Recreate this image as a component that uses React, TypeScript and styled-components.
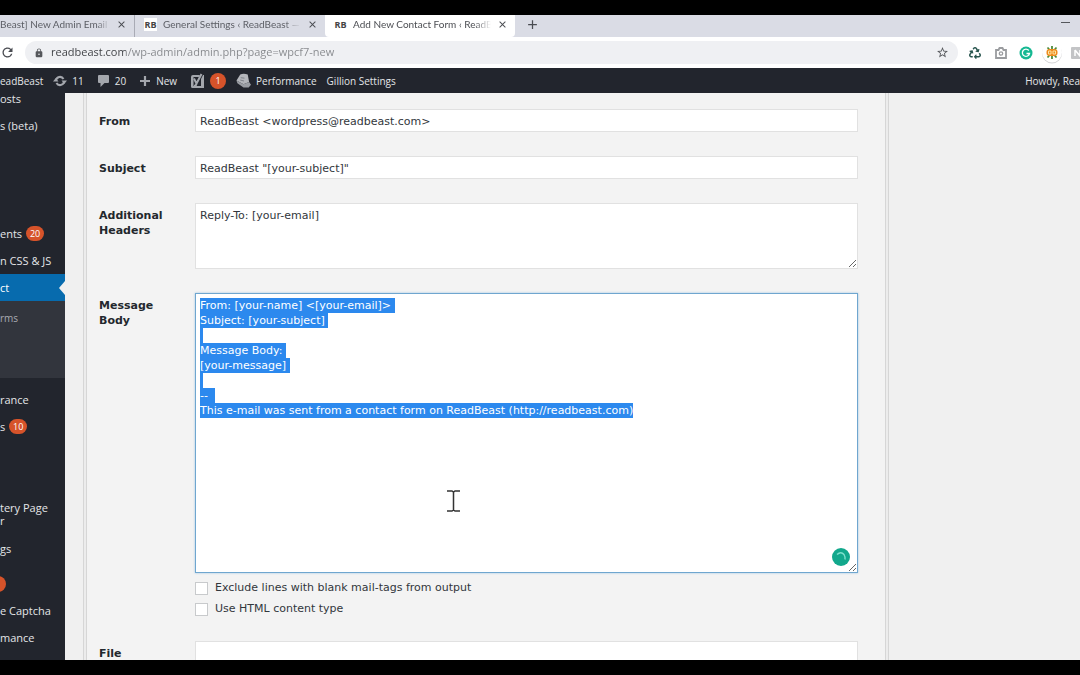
import React, { useEffect, useRef } from "react";
import styled, { createGlobalStyle, css } from "styled-components";
import { FaRecycle } from "react-icons/fa";
import { MdOutlineStarBorder, MdLock, MdRefresh, MdClose, MdAdd } from "react-icons/md";

const uiFont = `"Open Sans", "Noto Sans", sans-serif`;
const tabFont = `Lato, "Open Sans", sans-serif`;
const formFont = `"DejaVu Sans", sans-serif`;

const GlobalStyle = createGlobalStyle`
  *, *::before, *::after { box-sizing: border-box; }
  body { margin: 0; background: #000; overflow: hidden; }
  button { font: inherit; color: inherit; background: none; border: 0; padding: 0; }
  a { color: inherit; text-decoration: none; }
`;

const Frame = styled.div`
  height: 100vh;
  padding: 15px 0;
  background: #000;
  display: flex;
  flex-direction: column;
  font-family: ${uiFont};
  font-size: 10px;
`;

/* Browser chrome */

const TabStrip = styled.div`
  flex: none;
  height: 22px;
  display: flex;
  background: #dadce5;
  color: #5c5e65;
  font-family: ${tabFont};
`;

const Tab = styled.div<{ $active?: boolean; $cut?: boolean }>`
  flex: 0 1 auto;
  width: ${(p) => (p.$cut ? 135 : 190)}px;
  height: 22px;
  padding: 0 7px 4px ${(p) => (p.$cut ? 0 : 9)}px;
  display: flex;
  align-items: center;
  gap: 6px;
  ${(p) => p.$active && css`background: #fff; border-radius: 0 0 4px 4px; color: #4c4e53;`}
  ${(p) => p.$cut && css`border-right: 1px solid #a9abb5;`}
`;

const Favicon = styled.span`
  flex: none;
  width: 13px;
  height: 13px;
  background: #fff;
  color: #444;
  font-family: ${uiFont};
  font-size: 9px;
  line-height: 13px;
  font-weight: 700;
  text-align: center;
`;

const TabTitle = styled.span`
  flex: 1;
  overflow: hidden;
  white-space: nowrap;
  mask-image: linear-gradient(to right, #000 88%, transparent);
`;

const IconButton = styled.button`
  flex: none;
  display: grid;
  place-items: center;
  color: #4a4c52;
`;

const NewTab = styled(IconButton)`
  width: 34px;
  padding-bottom: 4px;
`;

const Minimize = styled(IconButton)`
  margin-left: auto;
  width: 30px;
  padding-bottom: 7px;
`;

const Toolbar = styled.div`
  flex: none;
  height: 31px;
  display: flex;
  align-items: center;
  background: #fff;
  overflow: hidden;
`;

const Omnibox = styled.label`
  flex: 1;
  height: 23px;
  margin-left: 10px;
  padding: 0 9px;
  display: flex;
  align-items: center;
  gap: 7px;
  border-radius: 12px;
  background: #eff0f3;
  color: #55575b;
`;

const Address = styled.input`
  flex: 1;
  min-width: 0;
  height: 20px;
  border: 0;
  padding: 0 0 2px;
  outline: 0;
  font-family: ${uiFont};
  font-size: 11px;
  line-height: 18px;
  color: #77797e;
  background: linear-gradient(to right, #3c3e42 75px, #85878b 75px);
  background-clip: text;
  -webkit-text-fill-color: transparent;
`;

const Extensions = styled.div`
  flex: none;
  width: 131px;
  margin-right: -9px;
  padding-left: 5px;
  display: flex;
  justify-content: space-between;
`;

const Extension = styled(IconButton)`
  width: 24px;
  height: 24px;
`;

/* WordPress admin */

const AdminBar = styled.nav`
  position: relative;
  z-index: 1;
  flex: none;
  height: 25px;
  display: flex;
  align-items: center;
  background: #22252d;
  color: #e4e5e8;
  overflow: hidden;
  white-space: nowrap;
`;

const BarLink = styled.a<{ $tight?: boolean }>`
  flex: none;
  margin-right: ${(p) => (p.$tight ? 10 : 13)}px;
  display: flex;
  align-items: center;
  gap: 5px;
`;

const Howdy = styled.a`
  margin-left: auto;
`;

const Badge = styled.span<{ $wide?: boolean }>`
  flex: none;
  width: ${(p) => (p.$wide ? 18 : 16)}px;
  height: ${(p) => (p.$wide ? 15 : 16)}px;
  border-radius: 8px;
  background: #d6532a;
  color: #fff;
  font-size: 9px;
  line-height: 15px;
  text-align: center;
`;

const Screen = styled.div`
  flex: 1;
  min-height: 0;
  display: flex;
  overflow: hidden;
  background: #f0f0f0;
`;

const Sidebar = styled.nav`
  flex: none;
  width: 65px;
  margin-top: -8px;
  background: #22252d;
  color: #e4e5e8;
  font-size: 11px;
  white-space: nowrap;
`;

const MenuItem = styled.a<{ $current?: boolean; $two?: boolean }>`
  position: relative;
  height: ${(p) => (p.$two ? 41 : 27)}px;
  display: flex;
  align-items: ${(p) => (p.$two ? "flex-start" : "center")};
  gap: 4px;
  ${(p) => p.$two && css`padding-top: 7px; line-height: 13px;`}
  ${(p) => p.$current && css`
    background: #076bae;
    color: #fff;
    &::after {
      content: "";
      position: absolute;
      right: 0;
      top: 7px;
      border: 7px solid transparent;
      border-left-width: 0;
      border-right: 6px solid #f0f0f0;
    }
  `}
`;

const Submenu = styled.div`
  height: 77px;
  padding-top: 10px;
  background: #32353d;
  color: #a9abb2;
  font-size: 10px;
  line-height: 15px;
`;

const MenuGap = styled.div<{ $size: number }>`
  height: ${(p) => p.$size}px;
`;

const ClippedBadge = styled(Badge)`
  margin-left: -10px;
`;

const Postbox = styled.main`
  flex: 1;
  min-width: 0;
  margin: 0 191px 0 18px;
  border: solid #d6d6d6;
  border-width: 0 1px;
  padding: 0 2px;
  height: max-content;
  background: #ececec;
`;

const Panel = styled.form`
  padding: 16px 27px 24px 12px;
  border: solid #d6d6d6;
  border-width: 0 1px;
  background: #f3f3f3;
  display: grid;
  grid-template-columns: 96px 1fr;
  row-gap: 24px;
  font-family: ${formFont};
  font-size: 11px;
  line-height: 15px;
  color: #32373c;
`;

const FieldLabel = styled.label`
  padding: 5px 20px 0 0;
  font-weight: 700;
  color: #23282d;
`;

const control = css`
  display: block;
  width: 100%;
  margin: 0;
  border: 1px solid #e1e1e1;
  border-radius: 0;
  outline: 0;
  background: #fff;
  color: #32373c;
  font-family: ${formFont};
  font-size: 11px;
  line-height: 15px;
`;

const TextInput = styled.input`
  ${control}
  height: 23px;
  padding: 3px 4px 2px;
`;

const TextBox = styled.textarea<{ $tall?: boolean }>`
  ${control}
  height: ${(p) => (p.$tall ? 280 : 66)}px;
  padding: 4px;
  resize: vertical;
  &:focus { border-color: #6fa6cf; box-shadow: 0 0 2px #9cc4e2; }
  &::selection { background: #2c89ee; color: #fff; }
`;

const BodyField = styled.div`
  position: relative;
`;

const Grammar = styled.svg`
  position: absolute;
  top: 255px;
  right: 8px;
`;

const TextCursor = styled.svg`
  position: absolute;
  top: 197px;
  left: 252px;
`;

const Checks = styled.div`
  margin-top: 7px;
  display: grid;
  row-gap: 5px;
`;

const CheckLabel = styled.label`
  display: flex;
  align-items: center;
  gap: 7px;
  line-height: 16px;
`;

const Checkbox = styled.input`
  appearance: none;
  width: 13px;
  height: 13px;
  margin: 0;
  border: 1px solid #c8cacc;
  background: #fff;
`;

const message = [
  "From: [your-name] <[your-email]>",
  "Subject: [your-subject]",
  "",
  "Message Body:",
  "[your-message]",
  "",
  "-- ",
  "This e-mail was sent from a contact form on ReadBeast (http://readbeast.com)",
].join("\n");

function CloseTab() {
  return (
    <IconButton aria-label="Close tab">
      <MdClose size={11} />
    </IconButton>
  );
}

function UpdateIcon() {
  return (
    <svg width="14" height="12" viewBox="0 0 14 12">
      <path d="M3 5.500a4 4 0 0 1 7.500-1.500M11 6.500a4 4 0 0 1-7.500 1.500" fill="none" stroke="#a4a7ad" strokeWidth="2" />
      <path d="M8.500 5.500H14l-2.700 3.500zM0 6.500h5.500L2.800 3z" fill="#a4a7ad" />
    </svg>
  );
}

function CommentIcon() {
  return (
    <svg width="13" height="13" viewBox="0 0 13 13">
      <path d="M2 1h9q1 0 1 1v6q0 1-1 1H7.500l-4 4V9H2Q1 9 1 8V2q0-1 1-1z" fill="#a4a7ad" />
    </svg>
  );
}

function PlusIcon() {
  return (
    <svg width="12" height="12" viewBox="0 0 12 12">
      <path d="M6 1v10M1 6h10" stroke="#a4a7ad" strokeWidth="2.200" />
    </svg>
  );
}

function YoastIcon() {
  return (
    <svg width="15" height="16" viewBox="0 0 15 16">
      <path d="M3 2h7l-1 2H3.500v9H11V6l2-4h1v13H2.500Q1 15 1 13.500V4Q1 2 3 2z" fill="#a4a7ad" />
      <path d="M4 5.500l2.500 5L11.500 1M6.500 10.500Q6 13 4 13" fill="none" stroke="#a4a7ad" strokeWidth="2" />
    </svg>
  );
}

function CubeIcon() {
  return (
    <svg width="15" height="15" viewBox="0 0 16 16">
      <path d="M4.500 1.500Q8 0 12.500 1.500L14 9.500 8 12 .5 8z" fill="#b4b6bb" />
      <path d="M.5 8L8 12l6-2.500 2 3-2.500 3H8L1.500 11z" fill="#9a9da3" />
      <path d="M5 5l4 .5M4.500 7.500l4 1" stroke="#7b7e85" />
    </svg>
  );
}

function CameraIcon() {
  return (
    <svg width="12" height="12" viewBox="0 0 12 12">
      <path d="M1 3h2.500l1-2h3l1 2H11v8H1z" fill="none" stroke="#9a9c9f" strokeWidth="1.800" />
      <circle cx="6" cy="6.500" r="1.700" fill="none" stroke="#9a9c9f" strokeWidth="1.300" />
    </svg>
  );
}

function GrammarlyIcon() {
  return (
    <svg width="14" height="14" viewBox="0 0 14 14">
      <circle cx="7" cy="7" r="6.500" fill="#15b892" />
      <path d="M9.800 4.500A3.600 3.600 0 1 0 10.500 7.500H7.500" fill="none" stroke="#fff" strokeWidth="1.300" />
    </svg>
  );
}

function FruitIcon() {
  return (
    <svg width="22" height="22" viewBox="0 0 22 22">
      <circle cx="11" cy="11.500" r="10" fill="#d4d4d6" />
      <circle cx="11" cy="10.500" r="10" fill="#fff" />
      <path d="M11 4v13M6.500 5.500l9 10M15.500 5.500l-9 10" stroke="#4d8b3b" strokeWidth="1.800" />
      <rect x="5.500" y="7" width="11" height="7" rx="3" fill="#ef8a1d" />
      <path d="M7.500 9h2.500v3H7.500zM12 9h2.500v3H12z" fill="none" stroke="#fbe3a0" />
    </svg>
  );
}

function GreyTile() {
  return (
    <svg width="14" height="14" viewBox="0 0 14 14">
      <rect x="1" y="1" width="13" height="12" rx="1" fill="#c3c4c6" />
      <path d="M5 4v6M5 4l5 6V4" fill="none" stroke="#fff" strokeWidth="1.500" />
    </svg>
  );
}

export default function App() {
  const body = useRef<HTMLTextAreaElement>(null);

  useEffect(() => {
    body.current?.focus({ preventScroll: true });
    body.current?.select();
  }, []);

  return (
    <Frame>
      <GlobalStyle />
      <TabStrip>
        <Tab $cut>
          <TabTitle>Beast] New Admin Email A</TabTitle>
          <CloseTab />
        </Tab>
        <Tab>
          <Favicon>RB</Favicon>
          <TabTitle>General Settings ‹ ReadBeast —</TabTitle>
          <CloseTab />
        </Tab>
        <Tab $active>
          <Favicon>RB</Favicon>
          <TabTitle>Add New Contact Form ‹ ReadBe</TabTitle>
          <CloseTab />
        </Tab>
        <NewTab aria-label="New tab"><MdAdd size={15} /></NewTab>
        <Minimize aria-label="Minimize">
          <svg width="9" height="1" viewBox="0 0 9 1"><path d="M0 .5h9" stroke="#55575c" /></svg>
        </Minimize>
      </TabStrip>

      <Toolbar>
        <IconButton aria-label="Reload"><MdRefresh size={15} /></IconButton>
        <Omnibox>
          <MdLock size={10} />
          <Address aria-label="Address" defaultValue="readbeast.com/wp-admin/admin.php?page=wpcf7-new" />
          <MdOutlineStarBorder size={13} />
        </Omnibox>
        <Extensions>
          <Extension aria-label="Recycle"><FaRecycle size={12} color="#29564f" /></Extension>
          <Extension aria-label="Screenshot"><CameraIcon /></Extension>
          <Extension aria-label="Grammar"><GrammarlyIcon /></Extension>
          <Extension aria-label="Keywords"><FruitIcon /></Extension>
          <Extension aria-label="Extension"><GreyTile /></Extension>
        </Extensions>
      </Toolbar>

      <AdminBar>
        <BarLink href="#" $tight>eadBeast</BarLink>
        <BarLink href="#"><UpdateIcon />11</BarLink>
        <BarLink href="#"><CommentIcon />20</BarLink>
        <BarLink href="#"><PlusIcon />New</BarLink>
        <BarLink href="#" $tight><YoastIcon /><Badge>1</Badge></BarLink>
        <BarLink href="#" $tight><CubeIcon />Performance</BarLink>
        <BarLink href="#">Gillion Settings</BarLink>
        <Howdy href="#">Howdy, Rea</Howdy>
      </AdminBar>

      <Screen>
        <Sidebar>
          <MenuItem href="#">osts</MenuItem>
          <MenuItem href="#">s (beta)</MenuItem>
          <MenuGap $size={81} />
          <MenuItem href="#">ents <Badge $wide>20</Badge></MenuItem>
          <MenuItem href="#">n CSS &amp; JS</MenuItem>
          <MenuItem href="#" $current>ct</MenuItem>
          <Submenu><a href="#">rms</a></Submenu>
          <MenuGap $size={8} />
          <MenuItem href="#">rance</MenuItem>
          <MenuItem href="#">s <Badge $wide>10</Badge></MenuItem>
          <MenuGap $size={54} />
          <MenuItem href="#" $two>tery Page<br />r</MenuItem>
          <MenuItem href="#">gs</MenuItem>
          <MenuGap $size={8} />
          <MenuItem href="#" aria-label="Updates"><ClippedBadge /></MenuItem>
          <MenuItem href="#">e Captcha</MenuItem>
          <MenuItem href="#">mance</MenuItem>
        </Sidebar>

        <Postbox>
          <Panel>
            <FieldLabel htmlFor="from">From</FieldLabel>
            <TextInput id="from" defaultValue="ReadBeast <wordpress@readbeast.com>" />

            <FieldLabel htmlFor="subject">Subject</FieldLabel>
            <TextInput id="subject" defaultValue={'ReadBeast "[your-subject]"'} />

            <FieldLabel htmlFor="headers">Additional Headers</FieldLabel>
            <TextBox id="headers" defaultValue="Reply-To: [your-email]" />

            <FieldLabel htmlFor="body">Message Body</FieldLabel>
            <BodyField>
              <TextBox id="body" ref={body} $tall spellCheck={false} defaultValue={message} />
              <TextCursor width="13" height="22" viewBox="0 0 13 22">
                <path d="M0 1h5l1.500 1L8 1h5M6.500 2v18M0 21h5l1.500-1L8 21h5" fill="none" stroke="#333" strokeWidth="1.500" />
              </TextCursor>
              <Grammar width="18" height="18" viewBox="0 0 18 18">
                <circle cx="9" cy="9" r="9" fill="#12a88c" />
                <path d="M5 6.500Q9 3 12 6.500Q13.500 9 13 11.500" fill="none" stroke="#7fe0cd" strokeWidth="1.400" />
              </Grammar>
              <Checks>
                <CheckLabel><Checkbox type="checkbox" />Exclude lines with blank mail-tags from output</CheckLabel>
                <CheckLabel><Checkbox type="checkbox" />Use HTML content type</CheckLabel>
              </Checks>
            </BodyField>

            <FieldLabel htmlFor="file">File</FieldLabel>
            <TextBox id="file" />
          </Panel>
        </Postbox>
      </Screen>
    </Frame>
  );
}
